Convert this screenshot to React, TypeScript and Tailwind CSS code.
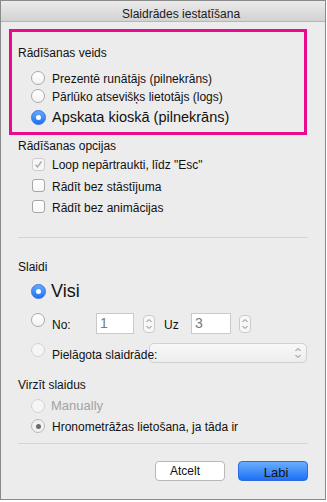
import React from 'react'

type RadioState = 'off' | 'on' | 'disabled' | 'dot'

function Radio({ state }: { state: RadioState }) {
    if (state === 'on') {
        return (
            <div className="w-[15px] h-[15px] shrink-0 rounded-full border border-[#2f74e6] bg-linear-to-b from-[#64aafc] to-[#1f6ff5] flex items-center justify-center">
                <div className="w-[5px] h-[5px] rounded-full bg-white" />
            </div>
        )
    }
    if (state === 'disabled') {
        return <div className="w-[14px] h-[14px] shrink-0 rounded-full border border-[#d2d2d2] bg-[#f5f5f5]" />
    }
    if (state === 'dot') {
        return (
            <div className="w-[14px] h-[14px] shrink-0 rounded-full border border-[#b9b9b9] bg-[#f1f1f1] flex items-center justify-center">
                <div className="w-[5px] h-[5px] rounded-full bg-[#6b6b6b]" />
            </div>
        )
    }
    return <div className="w-[14px] h-[14px] shrink-0 rounded-full border border-[#a9a9a9] bg-linear-to-b from-white to-[#f3f3f3]" />
}

function Checkbox({ checked }: { checked?: boolean }) {
    if (checked) {
        return (
            <div className="w-[13px] h-[13px] shrink-0 rounded-[3px] border border-[#cdcdcd] bg-[#f6f6f6] flex items-center justify-center">
                <svg width="9" height="9" viewBox="0 0 9 9">
                    <polyline points="1.5,4.8 3.5,7 7.5,1.5" fill="none" stroke="#a8a8a8" strokeWidth="1.3" />
                </svg>
            </div>
        )
    }
    return <div className="w-[13px] h-[13px] shrink-0 rounded-[3px] border border-[#a6a6a6] bg-linear-to-b from-white to-[#f7f7f7]" />
}

function Chevrons({ w, h }: { w: number, h: number }) {
    const cx = w / 2
    const mid = h / 2
    return (
        <svg width={w} height={h} viewBox={`0 0 ${w} ${h}`}>
            <polyline points={`${cx - 2.5},${mid - 2} ${cx},${mid - 4.5} ${cx + 2.5},${mid - 2}`} fill="none" stroke="#808080" strokeWidth="1" />
            <polyline points={`${cx - 2.5},${mid + 2} ${cx},${mid + 4.5} ${cx + 2.5},${mid + 2}`} fill="none" stroke="#808080" strokeWidth="1" />
        </svg>
    )
}

function Stepper() {
    return (
        <div className="w-[12px] h-[18px] shrink-0 rounded-[4px] border border-[#cbcbcb] bg-[#f7f7f7] flex items-center justify-center">
            <Chevrons w={10} h={16} />
        </div>
    )
}

export default function App() {
    return (
        <div className="w-[326px] h-[500px] border border-[#8a8a8a] bg-[#ececec] flex flex-col font-['Liberation_Sans',Arial,sans-serif] text-[12px] leading-[14px] text-[#111]">
            {/* title bar */}
            <div className="h-[21px] shrink-0 border-b border-[#b5b5b5] bg-linear-to-b from-[#ecebec] to-[#d3d2d3] pl-[121px] pt-[6px] text-[#1a1a1a]">
                Slaidrādes iestatīšana
            </div>

            {/* Rādīšanas veids */}
            <div className="ml-[8px] mt-[7px] w-[298px] h-[106px] shrink-0 border-[3px] border-[#ea0a8e] pl-[6px] pt-[14px]">
                <div>Rādīšanas veids</div>
                <div className="mt-[9px] h-[18px] flex items-center pl-[13px]">
                    <Radio state="off" />
                    <span className="ml-[7px] pt-[2px]">Prezentē runātājs (pilnekrāns)</span>
                </div>
                <div className="h-[18px] flex items-center pl-[13px]">
                    <Radio state="off" />
                    <span className="ml-[7px] pt-[2px]">Pārlūko atsevišķs lietotājs (logs)</span>
                </div>
                <div className="mt-[1px] h-[23px] flex items-center pl-[13px]">
                    <Radio state="on" />
                    <span className="ml-[6px] text-[14.5px] leading-[17px]">Apskata kioskā (pilnekrāns)</span>
                </div>
            </div>

            {/* Rādīšanas opcijas */}
            <div className="ml-[17px] mt-[4px]">Rādīšanas opcijas</div>
            <div className="mt-[1px] h-[21px] flex items-center pl-[31px]">
                <Checkbox checked />
                <span className="ml-[7px]">Loop nepārtraukti, līdz "Esc"</span>
            </div>
            <div className="h-[21px] flex items-center pl-[31px]">
                <Checkbox />
                <span className="ml-[7px] pt-[3px]">Rādīt bez stāstījuma</span>
            </div>
            <div className="h-[21px] flex items-center pl-[31px]">
                <Checkbox />
                <span className="ml-[7px] pt-[3px]">Rādīt bez animācijas</span>
            </div>

            <div className="ml-[17px] mt-[20px] w-[290px] h-[1px] bg-[#d4d4d4]" />

            {/* Slaidi */}
            <div className="ml-[17px] mt-[22px]">Slaidi</div>
            <div className="mt-[6px] h-[22px] flex items-center pl-[30px]">
                <Radio state="on" />
                <span className="ml-[5px] text-[18px] leading-[22px]">Visi</span>
            </div>
            <div className="mt-[11px] h-[21px] flex items-start pl-[30px]">
                <Radio state="off" />
                <span className="ml-[7px] mt-[5px] w-[44px]">No:</span>
                <div className="w-[38px] h-[21px] shrink-0 border border-[#cacaca] bg-white pl-[3px] text-[14px] leading-[19px] text-[#7a7a7a]">1</div>
                <div className="ml-[9px] mt-[2px]"><Stepper /></div>
                <span className="ml-[9px] mt-[5px] w-[27px]">Uz</span>
                <div className="w-[40px] h-[21px] shrink-0 border border-[#cacaca] bg-white pl-[3px] text-[14px] leading-[19px] text-[#7a7a7a]">3</div>
                <div className="ml-[8px] mt-[2px]"><Stepper /></div>
            </div>
            <div className="mt-[9px] h-[20px] flex items-start pl-[30px]">
                <Radio state="disabled" />
                <span className="relative z-10 ml-[7px] mt-[5px] w-[97px] whitespace-nowrap">Pielāgota slaidrāde:</span>
                <div className="w-[158px] h-[20px] shrink-0 rounded-[5px] border border-[#d0d0d0] bg-linear-to-b from-[#f8f8f8] to-[#ededed] flex items-center justify-end pr-[3px]">
                    <Chevrons w={10} h={18} />
                </div>
            </div>

            {/* Virzīt slaidus */}
            <div className="ml-[17px] mt-[15px]">Virzīt slaidus</div>
            <div className="mt-[6px] h-[16px] flex items-center pl-[30px]">
                <Radio state="disabled" />
                <span className="ml-[6px] text-[13px] leading-[16px] text-[#a3a3a3]">Manually</span>
            </div>
            <div className="mt-[4px] h-[16px] flex items-center pl-[30px]">
                <Radio state="dot" />
                <span className="ml-[7px] pt-[1px]">Hronometrāžas lietošana, ja tāda ir</span>
            </div>

            <div className="ml-[17px] mt-[9px] w-[290px] h-[1px] bg-[#d4d4d4]" />

            <div className="mt-[17px] flex justify-end gap-[13px] pr-[17px]">
                <button type="button" className="w-[70px] h-[20px] rounded-[4px] border border-[#b8b8b8] bg-white text-[12px] leading-[18px] text-[#111] pr-[10px]">
                    Atcelt
                </button>
                <button type="button" className="w-[70px] h-[20px] rounded-[4px] border border-[#2c6be3] bg-linear-to-b from-[#69adfc] to-[#1d6ff6] text-[13px] leading-[18px] text-[#111] pt-[2px] pl-[6px]">
                    Labi
                </button>
            </div>
        </div>
    )
}
